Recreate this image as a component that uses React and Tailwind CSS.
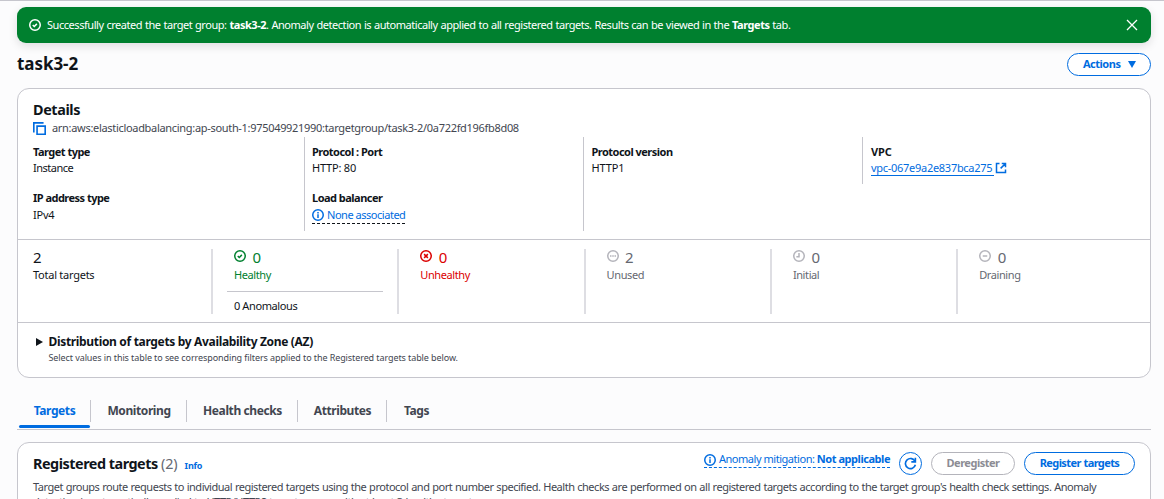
import React from "react";

const ring = { fill: "none", stroke: "currentColor", strokeWidth: 2 };

function Icon({ children, className = "" }) {
  return (
    <svg viewBox="0 0 16 16" className={`shrink-0 ${className}`} {...ring}>
      {children}
    </svg>
  );
}

const CheckIcon = ({ className }) => (
  <Icon className={className}>
    <circle cx="8" cy="8" r="7" />
    <path d="m5 8 2 2 3.5-3.5" />
  </Icon>
);
const ErrorIcon = ({ className }) => (
  <Icon className={className}>
    <circle cx="8" cy="8" r="7" />
    <path d="m5.5 5.5 5 5M10.5 5.5l-5 5" />
  </Icon>
);
const DotsIcon = ({ className }) => (
  <Icon className={className}>
    <circle cx="8" cy="8" r="7" />
    <path d="M4 8h2M7 8h2M10 8h2" />
  </Icon>
);
const ClockIcon = ({ className }) => (
  <Icon className={className}>
    <circle cx="8" cy="8" r="7" />
    <path d="M8 4v5H4.5" />
  </Icon>
);
const MinusIcon = ({ className }) => (
  <Icon className={className}>
    <circle cx="8" cy="8" r="7" />
    <path d="M5 8h6" />
  </Icon>
);
const InfoIcon = ({ className }) => (
  <Icon className={className}>
    <circle cx="8" cy="8" r="7" />
    <path d="M8 4v2M8 7v5" />
  </Icon>
);
const CopyIcon = ({ className }) => (
  <Icon className={className}>
    <path d="M5 5h10v10H5z" />
    <path d="M1 13V1h12" />
  </Icon>
);
const ExternalIcon = ({ className }) => (
  <Icon className={className}>
    <path d="M6 2H2v12h12v-4M9 2h5v5M14 2 7.5 8.5" />
  </Icon>
);
const RefreshIcon = ({ className }) => (
  <Icon className={className}>
    <path d="M14 1v5H9" />
    <path d="M14 9.5A6.2 6.2 0 1 1 13.6 5.5" />
  </Icon>
);

function Field({ label, children, valueClass = "leading-[15px]" }) {
  return (
    <div className="h-[46px]">
      <div className="h-[16px] font-bold leading-[16px] tracking-[-0.52px]">{label}</div>
      <div className={`h-[17px] ${valueClass}`}>{children}</div>
    </div>
  );
}

function Stat({ icon, value, label, color, children }) {
  return (
    <div className="h-[65px] w-[186.3px] shrink-0 border-l-2 border-[#dedee3] pl-[14px]">
      <div className={`pl-[7px] ${color}`}>
        <div className="flex h-[16px]">
          {icon}
          <span className="ml-[6.5px] text-[15px] leading-[16px] tracking-normal">{value}</span>
        </div>
        <div className="h-[18px] leading-[19px]">{label}</div>
      </div>
      {children}
    </div>
  );
}

function Tab({ label, active, className = "" }) {
  return (
    <div className={`flex h-[29px] flex-col ${className}`}>
      <div
        className={`flex h-[22px] items-center justify-center text-[12px] font-bold tracking-[-0.4px] ${
          active ? "text-[#006ce0]" : "text-[#424650]"
        }`}
      >
        {label}
      </div>
      {active && <div className="mt-[3px] h-[3px] rounded-full bg-[#006ce0]" />}
    </div>
  );
}

const TabRule = () => <div className="h-[22px] w-px shrink-0 bg-[#c6c6cd]" />;

export default function App() {
  return (
    <div className="h-[499px] w-[1164px] overflow-hidden whitespace-nowrap border-t border-[#c6c6cd] bg-[#fcfcfd] pl-[17px] pr-[13px] pt-[6px] font-['Noto_Sans',sans-serif] text-[11px] tracking-[-0.4px] text-[#0f141a]">
      <div className="flex h-[36px] items-center rounded-[9px] bg-[#00802f] pl-[12px] pr-[13px] text-white shadow-[0_3px_10px_rgba(0,7,22,0.12)]">
        <CheckIcon className="size-[12px]" />
        <div className="ml-[6px] grow tracking-[-0.45px] [word-spacing:0.4px]">
          Successfully created the target group: <b>task3-2</b>. Anomaly detection is automatically applied to
          all registered targets. Results can be viewed in the <b>Targets</b> tab.
        </div>
        <svg viewBox="0 0 12 12" className="size-[12px]" fill="none" stroke="currentColor" strokeWidth="1.3">
          <path d="m1 1 10 10M11 1 1 11" />
        </svg>
      </div>

      <div className="flex h-[45px] items-start justify-between">
        <h1 className="mt-[8px] text-[17px] font-bold leading-[26px] tracking-[-0.05px]">task3-2</h1>
        <button className="mt-[10px] flex h-[23px] w-[84px] items-center rounded-full border border-[#006ce0] bg-white pl-[15px] font-bold tracking-[-0.5px] text-[#006ce0]">
          Actions
          <svg viewBox="0 0 8 7" className="ml-[8px] h-[7px] w-[8px]" fill="currentColor">
            <path d="M0 0h8L4 7z" />
          </svg>
        </button>
      </div>

      <section className="h-[290px] rounded-[12px] border border-[#c6c6cd] bg-white">
        <div className="h-[48px] pl-[15px] pt-[11px]">
          <h2 className="h-[20px] text-[14.4px] font-bold leading-[20px]">Details</h2>
          <div className="flex h-[16px] items-center text-[#424650]">
            <CopyIcon className="size-[13px] text-[#006ce0]" />
            <span className="ml-[6px] tracking-[-0.31px]">
              arn:aws:elasticloadbalancing:ap-south-1:975049921990:targetgroup/task3-2/0a722fd196fb8d08
            </span>
          </div>
        </div>
        <div className="flex h-[103px] items-start border-b border-[#c6c6cd] pl-[15px]">
          <div className="h-[94px] w-[271px] pt-[7px]">
            <Field label="Target type">
              <span className="tracking-[-0.5px]">Instance</span>
            </Field>
            <Field label="IP address type" valueClass="leading-[17px]">
              <span className="tracking-[-0.2px]">IPv4</span>
            </Field>
          </div>
          <div className="h-[94px] w-[279px] border-l border-[#c6c6cd] pl-[7px] pt-[7px]">
            <Field label="Protocol : Port">
              <span className="tracking-[-0.2px]">HTTP: 80</span>
            </Field>
            <Field label="Load balancer" valueClass="leading-[17px]">
              <span className="inline-flex h-[18px] items-center border-b border-dashed border-[#0f141a] tracking-[-0.47px] text-[#006ce0]">
                <InfoIcon className="mr-[3px] size-[12px]" />
                None associated
              </span>
            </Field>
          </div>
          <div className="h-[94px] w-[279px] border-l border-[#c6c6cd] pl-[7.5px] pt-[7px]">
            <Field label="Protocol version">
              <span className="tracking-[-0.1px]">HTTP1</span>
            </Field>
          </div>
          <div className="h-[47px] border-l border-[#c6c6cd] pl-[8px] pt-[7px]">
            <Field label={<span className="tracking-[-0.15px]">VPC</span>}>
              <span className="flex items-center text-[#006ce0]">
                <span className="h-[16px] border-b border-[#006ce0] pr-[2px] leading-[16px] tracking-[-0.28px]">
                  vpc-067e9a2e837bca275
                </span>
                <ExternalIcon className="ml-px size-[12px]" />
              </span>
            </Field>
          </div>
        </div>

        <div className="flex h-[83px] border-b border-[#c6c6cd] pl-[15px] pt-[9px]">
          <div className="w-[178px] shrink-0">
            <div className="h-[16px] text-[15px] leading-[16px]">2</div>
            <div className="leading-[19px] tracking-[-0.25px]">Total targets</div>
          </div>
          <Stat icon={<CheckIcon className="mt-px size-[12px]" />} value="0" label="Healthy" color="text-[#00802f]">
            <div className="mt-[8px] h-px w-[156px] bg-[#c6c6cd]" />
            <div className="mt-[5px] pl-[7px] leading-[18px]">0 Anomalous</div>
          </Stat>
          <Stat
            icon={<ErrorIcon className="mt-px size-[12px]" />}
            value="0"
            label="Unhealthy"
            color="text-[#db0000]"
          />
          <Stat
            icon={<DotsIcon className="mt-px size-[12px] text-[#b4b4bb]" />}
            value="2"
            label="Unused"
            color="text-[#656871]"
          />
          <Stat
            icon={<ClockIcon className="mt-px size-[12px] text-[#b4b4bb]" />}
            value="0"
            label="Initial"
            color="text-[#656871]"
          />
          <Stat
            icon={<MinusIcon className="mt-px size-[12px] text-[#b4b4bb]" />}
            value="0"
            label="Draining"
            color="text-[#656871]"
          />
        </div>

        <div className="flex pl-[18px] pt-[10px]">
          <svg viewBox="0 0 7 8" className="mt-[5px] h-[8px] w-[7px]" fill="currentColor">
            <path d="M0 0 7 4 0 8z" />
          </svg>
          <div className="ml-[5.5px]">
            <h3 className="h-[18px] text-[12px] font-bold leading-[18px] tracking-[-0.33px]">
              Distribution of targets by Availability Zone (AZ)
            </h3>
            <p className="text-[9px] leading-[14px] tracking-[-0.09px] text-[#424650]">
              Select values in this table to see corresponding filters applied to the Registered targets table
              below.
            </p>
          </div>
        </div>
      </section>

      <nav className="mt-[22px] flex h-[30px] border-b border-[#c6c6cd]">
        <Tab label="Targets" active className="ml-[2px] w-[71px]" />
        <TabRule />
        <Tab label="Monitoring" className="w-[95px] pl-px" />
        <TabRule />
        <Tab label="Health checks" className="w-[110px] pl-px" />
        <TabRule />
        <Tab label="Attributes" className="w-[88px] pl-px" />
        <TabRule />
        <Tab label="Tags" className="w-[59px]" />
      </nav>

      <section className="mt-[12px] h-[120px] rounded-[12px] border border-[#c6c6cd] bg-white pl-[15px] pr-[15px] pt-[9px]">
        <div className="flex h-[26px] items-start">
          <h2 className="mt-px text-[14.4px] font-bold leading-[22px] tracking-[-0.48px]">
            Registered targets <span className="font-normal tracking-[-0.1px] text-[#656871]">(2)</span>
          </h2>
          <span className="ml-[7px] mt-[7px] text-[9px] font-bold leading-[14px] tracking-[-0.2px] text-[#006ce0]">
            Info
          </span>
          <div className="ml-auto flex h-[16px] items-center border-b border-dashed border-[#006ce0] text-[#006ce0]">
            <InfoIcon className="mr-[3px] size-[12px]" />
            <span className="tracking-[-0.46px]">
              Anomaly mitigation: <b>Not applicable</b>
            </span>
          </div>
          <button className="ml-[9px] flex size-[23px] items-center justify-center rounded-full border border-[#006ce0] text-[#006ce0]">
            <RefreshIcon className="size-[13px]" />
          </button>
          <button className="ml-[9px] h-[23px] w-[84px] rounded-full border border-[#b4b4bb] font-bold tracking-[-0.5px] text-[#8c8c94]">
            Deregister
          </button>
          <button className="ml-[9px] h-[23px] w-[111px] rounded-full border border-[#006ce0] font-bold tracking-[-0.6px] text-[#006ce0] [word-spacing:0.5px]">
            Register targets
          </button>
        </div>
        <p className="mt-px leading-[15px] tracking-[-0.48px] text-[#424650] [word-spacing:0.4px]">
          Target groups route requests to individual registered targets using the protocol and port number
          specified. Health checks are performed on all registered targets according to the target group's health
          check settings. Anomaly
          <br />
          detection is automatically applied to HTTP/HTTPS target groups with at least 3 healthy targets.
        </p>
      </section>
    </div>
  );
}
